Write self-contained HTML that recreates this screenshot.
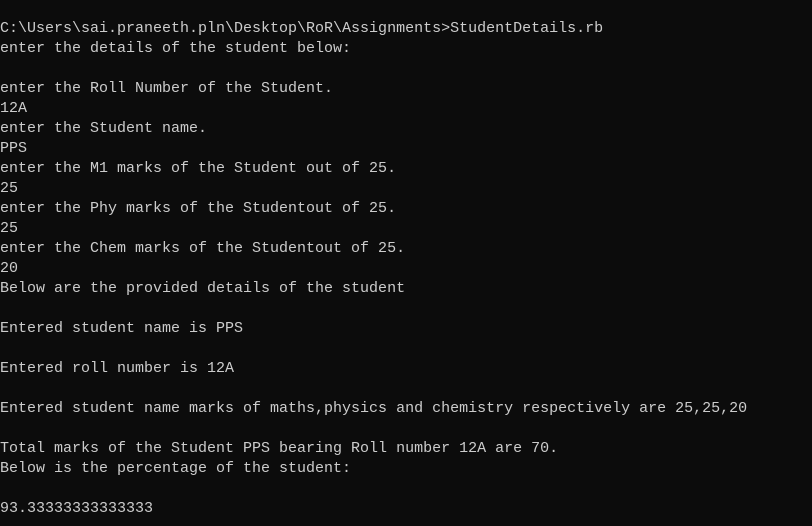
<!DOCTYPE html>
<html><head><meta charset="utf-8"><style>
html,body{margin:0;padding:0;background:#0c0c0c;width:812px;height:526px;overflow:hidden}
pre{margin:0;position:absolute;left:0;top:19px;font-family:"Liberation Mono",monospace;font-size:15px;line-height:20px;color:#cccccc;white-space:pre}
</style></head><body><pre>C:\Users\sai.praneeth.pln\Desktop\RoR\Assignments>StudentDetails.rb
enter the details of the student below:

enter the Roll Number of the Student.
12A
enter the Student name.
PPS
enter the M1 marks of the Student out of 25.
25
enter the Phy marks of the Studentout of 25.
25
enter the Chem marks of the Studentout of 25.
20
Below are the provided details of the student

Entered student name is PPS

Entered roll number is 12A

Entered student name marks of maths,physics and chemistry respectively are 25,25,20

Total marks of the Student PPS bearing Roll number 12A are 70.
Below is the percentage of the student:

93.33333333333333</pre></body></html>
